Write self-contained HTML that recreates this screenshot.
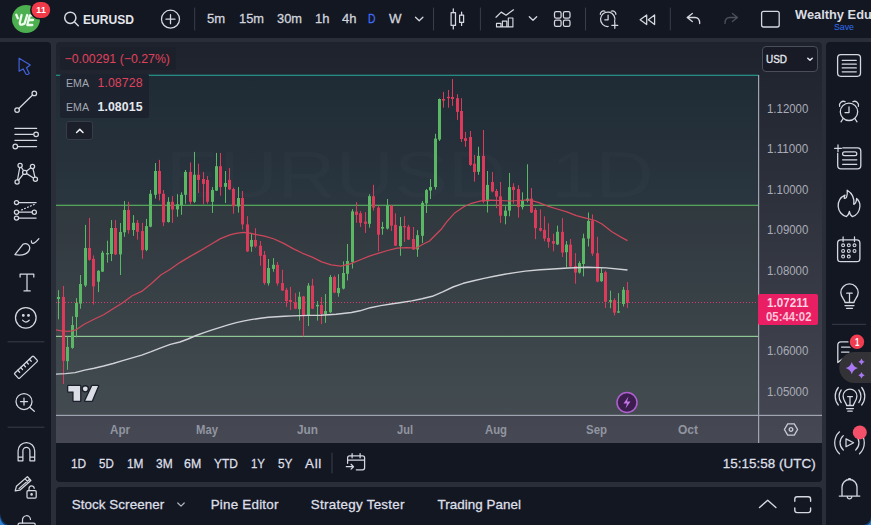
<!DOCTYPE html>
<html><head><meta charset="utf-8"><title>EURUSD chart</title>
<style>
*{box-sizing:border-box;margin:0;padding:0}
html,body{width:871px;height:525px;overflow:hidden;background:#2a2e39;font-family:"Liberation Sans",sans-serif;color:#d1d4dc}
.abs{position:absolute}
#top{left:0;top:0;width:871px;height:38px;background:#131722}
#left{left:0;top:42px;width:51px;height:483px;background:#131722;border-top-right-radius:4px}
#right{left:826px;top:42px;width:45px;height:483px;background:#131722;border-top-left-radius:4px}
#chart{left:56px;top:42px;width:766px;height:401px;background:linear-gradient(#1e222d,#464954);border-radius:4px 4px 0 0}
#range{left:56px;top:443px;width:766px;height:39px;background:#131722;border-radius:0 0 4px 4px}
#bottom{left:56px;top:487px;width:766px;height:38px;background:#131722;border-radius:4px 4px 0 0}
.t{position:absolute;white-space:nowrap;line-height:1}
.sep{position:absolute;width:1px;background:#3a3e4a}
.hsep{position:absolute;height:1px;background:#3a3e4a}
svg{overflow:visible}
.ic{position:absolute;fill:none;stroke:#d1d4dc;stroke-width:1.2;stroke-linecap:round;stroke-linejoin:round}
</style></head><body>
<div id="top" class="abs"></div>
<div id="left" class="abs"></div>
<div id="right" class="abs"></div>
<div id="chart" class="abs"></div>
<div id="range" class="abs"></div>
<div id="bottom" class="abs"></div>
<svg class="abs" style="left:56px;top:42px" width="766" height="401" viewBox="56 42 766 401">
<rect x="56" y="75" width="702.5" height="130" fill="rgba(0,112,112,0.07)"/>
<rect x="56" y="205" width="702.5" height="210" fill="rgba(76,175,80,0.06)"/>
<text x="165.7" y="197" textLength="488" lengthAdjust="spacingAndGlyphs" font-size="65" fill="rgba(255,255,255,0.014)" font-family="Liberation Sans, sans-serif">EURUSD, 1D</text>
<text x="220" y="300" textLength="380" lengthAdjust="spacingAndGlyphs" font-size="44" fill="rgba(255,255,255,0.014)" font-family="Liberation Sans, sans-serif">Euro / U.S. Dollar</text>
<rect x="56" y="74.7" width="702.5" height="1.2" fill="#27958b"/>
<rect x="56" y="204.7" width="702.5" height="1.2" fill="#58ad5e"/>
<rect x="56" y="335.8" width="702.5" height="1.2" fill="#8fc795"/>
<line x1="56" y1="302.5" x2="758" y2="302.5" stroke="#d63a70" stroke-width="1" stroke-dasharray="1,2"/>
<rect x="58" y="290.2" width="1" height="29.1" fill="#5ab864"/>
<rect x="57" y="297.0" width="3" height="2.0" fill="#5ab864"/>
<rect x="63" y="285.9" width="1" height="98.1" fill="#dc3a5b"/>
<rect x="62" y="296.9" width="3" height="63.9" fill="#dc3a5b"/>
<rect x="67" y="336.4" width="1" height="33.4" fill="#5ab864"/>
<rect x="66" y="346.9" width="3" height="14.3" fill="#5ab864"/>
<rect x="72" y="316.4" width="1" height="32.4" fill="#5ab864"/>
<rect x="71" y="325.0" width="3" height="22.9" fill="#5ab864"/>
<rect x="76" y="298.2" width="1" height="39.2" fill="#5ab864"/>
<rect x="75" y="303.0" width="3" height="14.0" fill="#5ab864"/>
<rect x="80" y="275.0" width="1" height="33.7" fill="#5ab864"/>
<rect x="79" y="284.0" width="3" height="19.6" fill="#5ab864"/>
<rect x="85" y="224.9" width="1" height="62.1" fill="#5ab864"/>
<rect x="84" y="248.0" width="3" height="37.5" fill="#5ab864"/>
<rect x="89" y="217.9" width="1" height="42.8" fill="#dc3a5b"/>
<rect x="88" y="248.0" width="3" height="11.8" fill="#dc3a5b"/>
<rect x="93" y="255.4" width="1" height="49.1" fill="#dc3a5b"/>
<rect x="92" y="258.8" width="3" height="27.6" fill="#dc3a5b"/>
<rect x="98" y="270.2" width="1" height="21.9" fill="#5ab864"/>
<rect x="97" y="270.8" width="3" height="10.9" fill="#5ab864"/>
<rect x="102" y="250.8" width="1" height="21.2" fill="#5ab864"/>
<rect x="101" y="252.7" width="3" height="18.9" fill="#5ab864"/>
<rect x="107" y="240.7" width="1" height="21.9" fill="#5ab864"/>
<rect x="106" y="253.0" width="3" height="1.4" fill="#5ab864"/>
<rect x="111" y="220.1" width="1" height="41.0" fill="#5ab864"/>
<rect x="110" y="228.0" width="3" height="26.0" fill="#5ab864"/>
<rect x="115" y="220.1" width="1" height="34.9" fill="#dc3a5b"/>
<rect x="114" y="228.0" width="3" height="26.4" fill="#dc3a5b"/>
<rect x="120" y="223.0" width="1" height="52.0" fill="#5ab864"/>
<rect x="119" y="232.0" width="3" height="22.4" fill="#5ab864"/>
<rect x="124" y="201.0" width="1" height="35.8" fill="#5ab864"/>
<rect x="123" y="210.0" width="3" height="22.3" fill="#5ab864"/>
<rect x="128" y="201.8" width="1" height="31.9" fill="#dc3a5b"/>
<rect x="127" y="210.0" width="3" height="20.1" fill="#dc3a5b"/>
<rect x="133" y="215.1" width="1" height="20.7" fill="#5ab864"/>
<rect x="132" y="222.8" width="3" height="7.2" fill="#5ab864"/>
<rect x="137" y="220.0" width="1" height="19.6" fill="#dc3a5b"/>
<rect x="136" y="222.8" width="3" height="9.0" fill="#dc3a5b"/>
<rect x="142" y="222.8" width="1" height="36.0" fill="#dc3a5b"/>
<rect x="141" y="231.1" width="3" height="19.1" fill="#dc3a5b"/>
<rect x="146" y="218.9" width="1" height="32.3" fill="#5ab864"/>
<rect x="145" y="226.1" width="3" height="23.8" fill="#5ab864"/>
<rect x="150" y="190.0" width="1" height="37.2" fill="#5ab864"/>
<rect x="149" y="193.8" width="3" height="32.9" fill="#5ab864"/>
<rect x="155" y="163.0" width="1" height="35.6" fill="#5ab864"/>
<rect x="154" y="171.0" width="3" height="23.8" fill="#5ab864"/>
<rect x="159" y="159.9" width="1" height="40.6" fill="#dc3a5b"/>
<rect x="158" y="171.0" width="3" height="22.8" fill="#dc3a5b"/>
<rect x="163" y="190.0" width="1" height="36.1" fill="#dc3a5b"/>
<rect x="162" y="193.8" width="3" height="28.5" fill="#dc3a5b"/>
<rect x="168" y="197.2" width="1" height="25.4" fill="#5ab864"/>
<rect x="167" y="201.8" width="3" height="20.2" fill="#5ab864"/>
<rect x="172" y="196.1" width="1" height="26.7" fill="#dc3a5b"/>
<rect x="171" y="201.8" width="3" height="7.6" fill="#dc3a5b"/>
<rect x="177" y="194.2" width="1" height="22.5" fill="#5ab864"/>
<rect x="176" y="204.3" width="3" height="5.1" fill="#5ab864"/>
<rect x="181" y="192.3" width="1" height="22.5" fill="#5ab864"/>
<rect x="180" y="194.8" width="3" height="10.4" fill="#5ab864"/>
<rect x="185" y="170.0" width="1" height="33.7" fill="#5ab864"/>
<rect x="184" y="171.9" width="3" height="22.9" fill="#5ab864"/>
<rect x="190" y="162.4" width="1" height="41.9" fill="#dc3a5b"/>
<rect x="189" y="171.9" width="3" height="29.9" fill="#dc3a5b"/>
<rect x="194" y="151.9" width="1" height="51.1" fill="#5ab864"/>
<rect x="193" y="174.8" width="3" height="27.0" fill="#5ab864"/>
<rect x="198" y="163.7" width="1" height="29.2" fill="#dc3a5b"/>
<rect x="197" y="174.8" width="3" height="5.1" fill="#dc3a5b"/>
<rect x="203" y="171.9" width="1" height="32.4" fill="#dc3a5b"/>
<rect x="202" y="179.0" width="3" height="4.9" fill="#dc3a5b"/>
<rect x="207" y="176.1" width="1" height="27.6" fill="#dc3a5b"/>
<rect x="206" y="179.9" width="3" height="21.9" fill="#dc3a5b"/>
<rect x="212" y="187.1" width="1" height="25.8" fill="#5ab864"/>
<rect x="211" y="190.0" width="3" height="11.8" fill="#5ab864"/>
<rect x="216" y="152.9" width="1" height="38.1" fill="#5ab864"/>
<rect x="215" y="166.2" width="3" height="24.4" fill="#5ab864"/>
<rect x="220" y="152.9" width="1" height="42.8" fill="#dc3a5b"/>
<rect x="219" y="166.2" width="3" height="20.9" fill="#dc3a5b"/>
<rect x="225" y="171.0" width="1" height="32.0" fill="#5ab864"/>
<rect x="224" y="183.0" width="3" height="3.8" fill="#5ab864"/>
<rect x="229" y="168.1" width="1" height="21.9" fill="#dc3a5b"/>
<rect x="228" y="179.9" width="3" height="9.5" fill="#dc3a5b"/>
<rect x="233" y="187.7" width="1" height="26.1" fill="#dc3a5b"/>
<rect x="232" y="189.0" width="3" height="17.2" fill="#dc3a5b"/>
<rect x="238" y="187.1" width="1" height="25.5" fill="#5ab864"/>
<rect x="237" y="198.0" width="3" height="8.4" fill="#5ab864"/>
<rect x="242" y="191.0" width="1" height="38.5" fill="#dc3a5b"/>
<rect x="241" y="198.0" width="3" height="26.4" fill="#dc3a5b"/>
<rect x="247" y="216.2" width="1" height="35.8" fill="#dc3a5b"/>
<rect x="246" y="224.4" width="3" height="27.0" fill="#dc3a5b"/>
<rect x="251" y="233.9" width="1" height="17.9" fill="#5ab864"/>
<rect x="250" y="240.0" width="3" height="6.7" fill="#5ab864"/>
<rect x="255" y="228.2" width="1" height="19.4" fill="#dc3a5b"/>
<rect x="254" y="240.0" width="3" height="6.3" fill="#dc3a5b"/>
<rect x="260" y="241.0" width="1" height="24.7" fill="#dc3a5b"/>
<rect x="259" y="245.7" width="3" height="10.1" fill="#dc3a5b"/>
<rect x="264" y="251.0" width="1" height="33.8" fill="#dc3a5b"/>
<rect x="263" y="254.9" width="3" height="28.1" fill="#dc3a5b"/>
<rect x="268" y="259.0" width="1" height="26.6" fill="#5ab864"/>
<rect x="267" y="268.0" width="3" height="15.3" fill="#5ab864"/>
<rect x="273" y="258.1" width="1" height="13.6" fill="#5ab864"/>
<rect x="272" y="264.8" width="3" height="4.1" fill="#5ab864"/>
<rect x="277" y="261.9" width="1" height="23.7" fill="#dc3a5b"/>
<rect x="276" y="264.8" width="3" height="18.6" fill="#dc3a5b"/>
<rect x="282" y="269.8" width="1" height="21.1" fill="#dc3a5b"/>
<rect x="281" y="283.1" width="3" height="7.4" fill="#dc3a5b"/>
<rect x="286" y="287.8" width="1" height="19.1" fill="#dc3a5b"/>
<rect x="285" y="289.8" width="3" height="11.3" fill="#dc3a5b"/>
<rect x="290" y="286.9" width="1" height="23.1" fill="#dc3a5b"/>
<rect x="289" y="300.0" width="3" height="2.0" fill="#dc3a5b"/>
<rect x="295" y="293.1" width="1" height="16.1" fill="#dc3a5b"/>
<rect x="294" y="302.3" width="3" height="6.4" fill="#dc3a5b"/>
<rect x="299" y="291.8" width="1" height="28.8" fill="#5ab864"/>
<rect x="298" y="296.7" width="3" height="12.5" fill="#5ab864"/>
<rect x="303" y="295.9" width="1" height="40.4" fill="#dc3a5b"/>
<rect x="302" y="296.5" width="3" height="18.8" fill="#dc3a5b"/>
<rect x="308" y="283.0" width="1" height="43.0" fill="#5ab864"/>
<rect x="307" y="285.6" width="3" height="30.4" fill="#5ab864"/>
<rect x="312" y="278.8" width="1" height="30.4" fill="#dc3a5b"/>
<rect x="311" y="285.6" width="3" height="23.1" fill="#dc3a5b"/>
<rect x="317" y="301.1" width="1" height="19.5" fill="#5ab864"/>
<rect x="316" y="304.9" width="3" height="1.5" fill="#5ab864"/>
<rect x="321" y="297.0" width="1" height="27.1" fill="#dc3a5b"/>
<rect x="320" y="304.9" width="3" height="9.2" fill="#dc3a5b"/>
<rect x="325" y="294.0" width="1" height="28.9" fill="#5ab864"/>
<rect x="324" y="311.0" width="3" height="3.1" fill="#5ab864"/>
<rect x="330" y="275.0" width="1" height="38.0" fill="#5ab864"/>
<rect x="329" y="277.0" width="3" height="35.2" fill="#5ab864"/>
<rect x="334" y="275.6" width="1" height="17.6" fill="#dc3a5b"/>
<rect x="333" y="277.0" width="3" height="15.6" fill="#dc3a5b"/>
<rect x="338" y="274.2" width="1" height="22.5" fill="#5ab864"/>
<rect x="337" y="288.0" width="3" height="5.1" fill="#5ab864"/>
<rect x="343" y="261.3" width="1" height="28.1" fill="#5ab864"/>
<rect x="342" y="273.0" width="3" height="15.6" fill="#5ab864"/>
<rect x="347" y="244.0" width="1" height="36.4" fill="#5ab864"/>
<rect x="346" y="261.0" width="3" height="12.8" fill="#5ab864"/>
<rect x="352" y="209.1" width="1" height="59.4" fill="#5ab864"/>
<rect x="351" y="211.4" width="3" height="50.5" fill="#5ab864"/>
<rect x="356" y="202.1" width="1" height="20.6" fill="#dc3a5b"/>
<rect x="355" y="211.6" width="3" height="3.3" fill="#dc3a5b"/>
<rect x="360" y="211.2" width="1" height="15.8" fill="#dc3a5b"/>
<rect x="359" y="213.3" width="3" height="9.6" fill="#dc3a5b"/>
<rect x="365" y="212.1" width="1" height="20.8" fill="#dc3a5b"/>
<rect x="364" y="221.6" width="3" height="2.2" fill="#dc3a5b"/>
<rect x="369" y="194.3" width="1" height="33.3" fill="#5ab864"/>
<rect x="368" y="196.2" width="3" height="27.6" fill="#5ab864"/>
<rect x="373" y="184.8" width="1" height="25.7" fill="#dc3a5b"/>
<rect x="372" y="196.2" width="3" height="11.4" fill="#dc3a5b"/>
<rect x="378" y="205.7" width="1" height="45.7" fill="#dc3a5b"/>
<rect x="377" y="207.6" width="3" height="27.1" fill="#dc3a5b"/>
<rect x="382" y="221.9" width="1" height="12.8" fill="#5ab864"/>
<rect x="381" y="227.0" width="3" height="1.6" fill="#5ab864"/>
<rect x="387" y="199.0" width="1" height="30.5" fill="#5ab864"/>
<rect x="386" y="205.3" width="3" height="23.3" fill="#5ab864"/>
<rect x="391" y="204.8" width="1" height="26.1" fill="#dc3a5b"/>
<rect x="390" y="205.7" width="3" height="20.0" fill="#dc3a5b"/>
<rect x="395" y="213.3" width="1" height="32.8" fill="#dc3a5b"/>
<rect x="394" y="224.8" width="3" height="20.9" fill="#dc3a5b"/>
<rect x="400" y="217.1" width="1" height="38.7" fill="#5ab864"/>
<rect x="399" y="226.1" width="3" height="20.0" fill="#5ab864"/>
<rect x="404" y="216.2" width="1" height="25.7" fill="#dc3a5b"/>
<rect x="403" y="226.1" width="3" height="1.2" fill="#dc3a5b"/>
<rect x="408" y="224.8" width="1" height="15.2" fill="#dc3a5b"/>
<rect x="407" y="226.7" width="3" height="12.9" fill="#dc3a5b"/>
<rect x="413" y="227.0" width="1" height="22.9" fill="#dc3a5b"/>
<rect x="412" y="239.0" width="3" height="10.5" fill="#dc3a5b"/>
<rect x="417" y="230.1" width="1" height="26.7" fill="#5ab864"/>
<rect x="416" y="235.2" width="3" height="14.3" fill="#5ab864"/>
<rect x="422" y="201.0" width="1" height="41.9" fill="#5ab864"/>
<rect x="421" y="202.9" width="3" height="32.9" fill="#5ab864"/>
<rect x="426" y="189.0" width="1" height="24.0" fill="#5ab864"/>
<rect x="425" y="190.1" width="3" height="13.3" fill="#5ab864"/>
<rect x="430" y="179.0" width="1" height="20.0" fill="#5ab864"/>
<rect x="429" y="187.0" width="3" height="3.5" fill="#5ab864"/>
<rect x="435" y="133.8" width="1" height="55.7" fill="#5ab864"/>
<rect x="434" y="138.6" width="3" height="48.4" fill="#5ab864"/>
<rect x="439" y="98.5" width="1" height="42.5" fill="#5ab864"/>
<rect x="438" y="99.0" width="3" height="40.5" fill="#5ab864"/>
<rect x="443" y="91.9" width="1" height="15.8" fill="#dc3a5b"/>
<rect x="442" y="99.0" width="3" height="1.6" fill="#dc3a5b"/>
<rect x="448" y="90.0" width="1" height="17.7" fill="#dc3a5b"/>
<rect x="447" y="96.8" width="3" height="1.4" fill="#dc3a5b"/>
<rect x="452" y="79.1" width="1" height="26.7" fill="#dc3a5b"/>
<rect x="451" y="97.0" width="3" height="2.0" fill="#dc3a5b"/>
<rect x="457" y="94.2" width="1" height="25.7" fill="#dc3a5b"/>
<rect x="456" y="98.2" width="3" height="13.7" fill="#dc3a5b"/>
<rect x="461" y="98.2" width="1" height="43.8" fill="#dc3a5b"/>
<rect x="460" y="111.0" width="3" height="28.0" fill="#dc3a5b"/>
<rect x="465" y="131.9" width="1" height="14.9" fill="#dc3a5b"/>
<rect x="464" y="138.2" width="3" height="2.7" fill="#dc3a5b"/>
<rect x="470" y="131.0" width="1" height="34.8" fill="#dc3a5b"/>
<rect x="469" y="137.0" width="3" height="27.9" fill="#dc3a5b"/>
<rect x="474" y="155.0" width="1" height="26.6" fill="#dc3a5b"/>
<rect x="473" y="163.7" width="3" height="8.4" fill="#dc3a5b"/>
<rect x="478" y="146.8" width="1" height="28.0" fill="#5ab864"/>
<rect x="477" y="155.9" width="3" height="15.9" fill="#5ab864"/>
<rect x="483" y="130.0" width="1" height="73.3" fill="#dc3a5b"/>
<rect x="482" y="155.9" width="3" height="45.5" fill="#dc3a5b"/>
<rect x="487" y="171.0" width="1" height="41.5" fill="#5ab864"/>
<rect x="486" y="184.9" width="3" height="16.5" fill="#5ab864"/>
<rect x="492" y="171.9" width="1" height="20.4" fill="#dc3a5b"/>
<rect x="491" y="182.0" width="3" height="9.5" fill="#dc3a5b"/>
<rect x="496" y="189.0" width="1" height="19.1" fill="#dc3a5b"/>
<rect x="495" y="191.0" width="3" height="5.7" fill="#dc3a5b"/>
<rect x="500" y="182.0" width="1" height="41.0" fill="#dc3a5b"/>
<rect x="499" y="196.3" width="3" height="19.4" fill="#dc3a5b"/>
<rect x="505" y="206.2" width="1" height="18.1" fill="#5ab864"/>
<rect x="504" y="210.6" width="3" height="5.5" fill="#5ab864"/>
<rect x="509" y="172.9" width="1" height="43.4" fill="#5ab864"/>
<rect x="508" y="187.1" width="3" height="23.5" fill="#5ab864"/>
<rect x="513" y="183.3" width="1" height="20.4" fill="#dc3a5b"/>
<rect x="512" y="186.8" width="3" height="3.2" fill="#dc3a5b"/>
<rect x="518" y="185.2" width="1" height="32.4" fill="#dc3a5b"/>
<rect x="517" y="189.0" width="3" height="18.1" fill="#dc3a5b"/>
<rect x="522" y="192.3" width="1" height="17.1" fill="#5ab864"/>
<rect x="521" y="200.5" width="3" height="6.6" fill="#5ab864"/>
<rect x="527" y="164.3" width="1" height="38.1" fill="#5ab864"/>
<rect x="526" y="198.6" width="3" height="2.4" fill="#5ab864"/>
<rect x="531" y="188.1" width="1" height="24.9" fill="#dc3a5b"/>
<rect x="530" y="198.6" width="3" height="13.9" fill="#dc3a5b"/>
<rect x="535" y="208.1" width="1" height="31.1" fill="#dc3a5b"/>
<rect x="534" y="210.0" width="3" height="18.2" fill="#dc3a5b"/>
<rect x="540" y="209.4" width="1" height="22.1" fill="#dc3a5b"/>
<rect x="539" y="228.1" width="3" height="2.5" fill="#dc3a5b"/>
<rect x="544" y="216.3" width="1" height="25.0" fill="#dc3a5b"/>
<rect x="543" y="229.9" width="3" height="8.7" fill="#dc3a5b"/>
<rect x="548" y="223.3" width="1" height="24.4" fill="#dc3a5b"/>
<rect x="547" y="238.0" width="3" height="3.8" fill="#dc3a5b"/>
<rect x="553" y="233.7" width="1" height="17.6" fill="#dc3a5b"/>
<rect x="552" y="241.1" width="3" height="2.6" fill="#dc3a5b"/>
<rect x="557" y="225.6" width="1" height="19.4" fill="#5ab864"/>
<rect x="556" y="231.8" width="3" height="12.6" fill="#5ab864"/>
<rect x="562" y="218.2" width="1" height="38.8" fill="#dc3a5b"/>
<rect x="561" y="231.8" width="3" height="20.8" fill="#dc3a5b"/>
<rect x="566" y="241.1" width="1" height="26.2" fill="#5ab864"/>
<rect x="565" y="244.6" width="3" height="7.6" fill="#5ab864"/>
<rect x="570" y="239.0" width="1" height="28.3" fill="#dc3a5b"/>
<rect x="569" y="244.6" width="3" height="21.9" fill="#dc3a5b"/>
<rect x="575" y="253.2" width="1" height="30.5" fill="#dc3a5b"/>
<rect x="574" y="266.0" width="3" height="6.6" fill="#dc3a5b"/>
<rect x="579" y="261.2" width="1" height="12.4" fill="#5ab864"/>
<rect x="578" y="263.1" width="3" height="9.5" fill="#5ab864"/>
<rect x="583" y="233.7" width="1" height="42.7" fill="#5ab864"/>
<rect x="582" y="238.3" width="3" height="25.7" fill="#5ab864"/>
<rect x="588" y="212.5" width="1" height="34.0" fill="#5ab864"/>
<rect x="587" y="220.9" width="3" height="17.7" fill="#5ab864"/>
<rect x="592" y="214.4" width="1" height="41.5" fill="#dc3a5b"/>
<rect x="591" y="220.5" width="3" height="33.1" fill="#dc3a5b"/>
<rect x="597" y="236.8" width="1" height="45.4" fill="#dc3a5b"/>
<rect x="596" y="253.2" width="3" height="28.4" fill="#dc3a5b"/>
<rect x="601" y="267.9" width="1" height="13.9" fill="#5ab864"/>
<rect x="600" y="273.0" width="3" height="8.2" fill="#5ab864"/>
<rect x="605" y="270.7" width="1" height="37.2" fill="#dc3a5b"/>
<rect x="604" y="272.2" width="3" height="29.6" fill="#dc3a5b"/>
<rect x="610" y="290.7" width="1" height="17.5" fill="#5ab864"/>
<rect x="609" y="300.2" width="3" height="1.6" fill="#5ab864"/>
<rect x="614" y="298.3" width="1" height="17.2" fill="#dc3a5b"/>
<rect x="613" y="300.2" width="3" height="12.4" fill="#dc3a5b"/>
<rect x="618" y="293.2" width="1" height="19.8" fill="#5ab864"/>
<rect x="617" y="311.3" width="3" height="1.3" fill="#5ab864"/>
<rect x="623" y="286.9" width="1" height="19.6" fill="#5ab864"/>
<rect x="622" y="289.8" width="3" height="14.2" fill="#5ab864"/>
<rect x="627" y="282.1" width="1" height="25.8" fill="#dc3a5b"/>
<rect x="626" y="290.1" width="3" height="12.6" fill="#dc3a5b"/>
<path d="M56.0,329.8 L62.0,331.0 L67.4,331.3 L72.0,330.8 L76.0,329.8 L84.6,324.0 L94.1,319.3 L103.6,314.7 L113.1,308.8 L122.7,302.8 L132.2,295.7 L141.7,291.4 L151.2,283.8 L160.8,275.0 L170.3,269.3 L179.8,262.6 L189.3,256.9 L196.0,253.1 L201.4,250.0 L211.0,244.3 L220.5,238.6 L230.0,234.8 L236.0,233.3 L243.6,232.4 L250.0,233.2 L255.0,234.3 L264.6,236.2 L274.1,239.0 L283.6,243.4 L293.1,248.6 L302.7,253.3 L312.2,257.1 L321.7,261.9 L331.2,264.8 L340.8,266.1 L350.3,263.8 L359.8,260.0 L369.3,256.2 L378.1,253.3 L387.6,250.5 L397.1,248.2 L406.7,247.6 L416.2,248.2 L421.9,244.8 L429.5,241.0 L435.2,235.2 L441.0,229.5 L446.7,221.9 L454.3,213.3 L463.8,206.7 L471.5,203.3 L481.0,200.9 L490.6,200.1 L500.1,200.5 L509.6,201.0 L519.1,200.5 L528.7,199.9 L538.2,202.4 L547.7,206.2 L557.2,209.0 L566.8,211.9 L576.3,215.7 L585.8,218.2 L595.3,220.5 L602.0,224.0 L611.9,231.7 L621.4,237.4 L627.5,240.6" fill="none" stroke="#cc475b" stroke-width="1.25" stroke-linejoin="round"/>
<path d="M56.0,374.1 L65.5,373.6 L75.0,372.6 L84.6,370.1 L94.1,368.2 L103.6,366.0 L113.1,363.5 L122.7,360.6 L132.2,357.8 L141.7,355.1 L151.2,351.7 L160.8,347.9 L170.3,344.4 L180.0,342.0 L188.0,339.0 L196.1,335.5 L204.1,332.6 L212.2,329.9 L220.2,327.3 L228.2,324.9 L236.3,322.6 L244.3,320.9 L252.3,319.4 L260.4,318.3 L268.4,317.3 L276.5,316.7 L284.5,316.2 L292.5,315.9 L308.6,315.4 L321.0,315.2 L336.2,314.3 L351.4,312.5 L360.0,310.8 L370.3,307.7 L380.7,305.6 L391.0,304.0 L401.3,302.5 L411.7,300.9 L422.0,298.8 L432.3,296.3 L442.7,291.8 L453.0,287.0 L463.3,283.3 L473.7,280.8 L484.0,278.4 L494.3,276.3 L504.7,274.2 L515.0,272.6 L525.3,271.1 L540.0,269.8 L549.0,269.2 L568.1,268.0 L587.1,267.3 L606.2,267.9 L627.5,270.0" fill="none" stroke="#d0d2d8" stroke-width="1.4" stroke-linejoin="round"/>
<rect x="758" y="75" width="1.2" height="368" fill="#a0a4b0"/>
<rect x="56" y="414.8" width="766" height="1.2" fill="#a0a4b0"/>
<g stroke="#1c202b" stroke-width="2.6" stroke-linejoin="round" fill="#1c202b"><path d="M68.3,386 H80.1 V400.8 H73.6 V391.5 H68.3 Z"/><circle cx="85.3" cy="388.8" r="2.4"/><path d="M92.2,386 H98 L91.8,400.8 H85.3 Z"/></g>
<g fill="#dcdee6"><path d="M68.3,386 H80.1 V400.8 H73.6 V391.5 H68.3 Z"/><circle cx="85.3" cy="388.8" r="2.4"/><path d="M92.2,386 H98 L91.8,400.8 H85.3 Z"/></g>
<g transform="translate(627,402.5)"><circle r="10" fill="#3b1e4e" stroke="#b05fd0" stroke-width="1.5"/><path d="M1.5,-6 L-3.5,1 H0 L-1.5,6 L3.5,-1 H0 Z" fill="#c774e8"/></g>
<rect x="758" y="294" width="60" height="31" rx="2" fill="#e91e63"/>
<g transform="translate(791,429.5)" fill="none" stroke="#c9ccd4" stroke-width="1.3"><path d="M-3.3,-5.7 H3.3 L6.6,0 L3.3,5.7 H-3.3 L-6.6,0 Z" stroke-linejoin="round"/><circle r="1.8"/></g>
</svg>
<!-- legend backgrounds -->
<div class="abs" style="left:60px;top:47px;width:116px;height:23px;background:#1b202b;border-radius:2px"></div>
<div class="abs" style="left:60px;top:74px;width:89px;height:43.5px;background:#1c232e;border-radius:2px"></div>
<div class="abs" style="left:65.5px;top:120.5px;width:27.5px;height:19.5px;background:#1a1f2a;border:1px solid #383c48;border-radius:3px"></div>
<svg class="ic" style="left:65.5px;top:120.5px;stroke:#f0f1f4;stroke-width:1.5" width="28" height="20"><path d="M10.6,11.5 L13.8,8.4 L17,11.5"/></svg>
<div class="abs" style="left:762px;top:46px;width:56px;height:26px;background:#181b26;border:1px solid #4a4e5a;border-radius:4px"></div>
<svg class="ic" style="left:762px;top:46px;stroke:#e6e8ee;stroke-width:1.5" width="56" height="26"><path d="M45.8,12.2 L48,14.3 L50.2,12.2"/></svg>
<div class="t" style="left:64.5px;top:52.5px;font-size:12.3px;color:#e0425c;letter-spacing:0.01px;">−0.00291 (−0.27%)</div>
<div class="t" style="left:65.5px;top:76.8px;font-size:11.6px;color:#a4a7b1;transform:scaleX(0.9150);transform-origin:0 0;">EMA</div>
<div class="t" style="left:97.5px;top:76.5px;font-size:12.3px;color:#e0425c;letter-spacing:0.09px;">1.08728</div>
<div class="t" style="left:65.5px;top:100.8px;font-size:11.6px;color:#a4a7b1;transform:scaleX(0.9150);transform-origin:0 0;">EMA</div>
<div class="t" style="left:97.5px;top:100.5px;font-size:12.3px;color:#e6e8ee;font-weight:bold;letter-spacing:0.09px;">1.08015</div>
<div class="t" style="left:766.0px;top:53.2px;font-size:11.7px;color:#e6e8ee;-webkit-text-stroke:0.35px #e6e8ee;transform:scaleX(0.8501);transform-origin:0 0;">USD</div>
<div class="t" style="left:767.0px;top:102.6px;font-size:12px;color:#a9acb7;transform:scaleX(0.9522);transform-origin:0 0;">1.12000</div>
<div class="t" style="left:767.0px;top:143.1px;font-size:12px;color:#a9acb7;transform:scaleX(0.9722);transform-origin:0 0;">1.11000</div>
<div class="t" style="left:767.0px;top:183.6px;font-size:12px;color:#a9acb7;transform:scaleX(0.9522);transform-origin:0 0;">1.10000</div>
<div class="t" style="left:767.0px;top:224.1px;font-size:12px;color:#a9acb7;transform:scaleX(0.9522);transform-origin:0 0;">1.09000</div>
<div class="t" style="left:767.0px;top:264.6px;font-size:12px;color:#a9acb7;transform:scaleX(0.9522);transform-origin:0 0;">1.08000</div>
<div class="t" style="left:767.0px;top:345.4px;font-size:12px;color:#a9acb7;transform:scaleX(0.9522);transform-origin:0 0;">1.06000</div>
<div class="t" style="left:767.0px;top:385.6px;font-size:12px;color:#a9acb7;transform:scaleX(0.9522);transform-origin:0 0;">1.05000</div>
<div class="t" style="left:110.0px;top:424.1px;font-size:12px;color:#9195a0;font-weight:bold;transform:scaleX(0.9678);transform-origin:0 0;">Apr</div>
<div class="t" style="left:196.3px;top:424.1px;font-size:12px;color:#9195a0;font-weight:bold;transform:scaleX(0.9425);transform-origin:0 0;">May</div>
<div class="t" style="left:297.0px;top:424.1px;font-size:12px;color:#9195a0;font-weight:bold;transform:scaleX(0.9844);transform-origin:0 0;">Jun</div>
<div class="t" style="left:397.0px;top:424.1px;font-size:12px;color:#9195a0;font-weight:bold;transform:scaleX(0.9229);transform-origin:0 0;">Jul</div>
<div class="t" style="left:485.0px;top:424.1px;font-size:12px;color:#9195a0;font-weight:bold;transform:scaleX(0.9432);transform-origin:0 0;">Aug</div>
<div class="t" style="left:585.5px;top:424.1px;font-size:12px;color:#9195a0;font-weight:bold;transform:scaleX(0.9542);transform-origin:0 0;">Sep</div>
<div class="t" style="left:678.0px;top:424.1px;font-size:12px;color:#9195a0;font-weight:bold;transform:scaleX(0.9999);transform-origin:0 0;">Oct</div>
<div class="t" style="left:767.0px;top:296.5px;font-size:12px;color:#ffd3e2;font-weight:bold;transform:scaleX(0.9717);transform-origin:0 0;">1.07211</div>
<div class="t" style="left:766.0px;top:310.7px;font-size:12px;color:#ffc4d8;font-weight:bold;transform:scaleX(0.9473);transform-origin:0 0;">05:44:02</div>
<svg class="abs" style="left:0;top:0" width="871" height="525" viewBox="0 0 871 525" fill="none" stroke="#d5d8df" stroke-width="1.25" stroke-linecap="round" stroke-linejoin="round">
<circle cx="26" cy="19" r="14" fill="#4caf50" stroke="none"/>
<g stroke="#eefcee" stroke-width="2.3" fill="none"><path d="M16.3,14.8 L17.8,18.3"/><path d="M21.6,15 L19.8,22.6 Q19.5,25 22,24.6 L24.5,23.6 L27.2,15"/><path d="M34,15.3 L29.8,15.3 L27.3,25 L32.3,25"/><path d="M28.8,20 L33,20"/></g>
<rect x="30" y="0.4" width="21.8" height="19.2" rx="9.6" fill="#131722" stroke="none"/>
<rect x="31.6" y="1.9" width="18.6" height="16.2" rx="8.1" fill="#f03a4a" stroke="none"/>
<circle cx="70.3" cy="17.8" r="5.6" stroke-width="1.5"/><path d="M74.5,22 L78.3,25.8" stroke-width="1.5"/>
<circle cx="170.5" cy="19.2" r="9" stroke-width="1.3"/><path d="M170.5,14.7 V23.7 M166,19.2 H175" stroke-width="1.3"/>
<path d="M415.5,17.3 L419.2,20.8 L422.9,17.3" stroke-width="1.3"/>
<rect x="451.1" y="12.7" width="4.4" height="12.7"/><path d="M453.3,8.8 V12.7 M453.3,25.4 V28.9"/>
<rect x="459.6" y="15.2" width="4" height="7.2"/><path d="M461.6,12.1 V15.2 M461.6,22.4 V25.4"/>
<path d="M496.5,26.9 V23.4 H500.9 V26.9 M502.4,26.9 V21.1 H506.8 V26.9 M508.3,26.9 V18 H512.9 V26.9 M496.5,26.9 H512.9" stroke-width="1.15"/>
<path d="M496,17.2 L501.2,12.1 L506.1,15.2 L513.5,9.8"/>
<path d="M529.3,16.8 L533,20.3 L536.7,16.8" stroke-width="1.3"/>
<rect x="554.5" y="11.7" width="6.6" height="6.3" rx="1.6"/>
<rect x="554.5" y="20.1" width="6.6" height="6.3" rx="1.6"/>
<rect x="563.4" y="11.7" width="6.6" height="6.3" rx="1.6"/>
<rect x="563.4" y="20.1" width="6.6" height="6.3" rx="1.6"/>
<path d="M614.6,21.5 A7.2,7.2 0 1,0 608.1,26.5"/><path d="M608.1,15 V19.8 H604.8"/><path d="M600.3,14.3 A3.3,3.3 0 0,1 605,11.2 M611.2,11.2 A3.3,3.3 0 0,1 615.9,14.3"/><path d="M614.8,22.3 V28.3 M611.8,25.3 H617.8"/>
<path d="M640.1,19.8 L646.7,15 V24.6 Z M648.3,19.8 L654.6,15 V24.6 Z"/>
<path d="M692.3,13.4 L687.2,17.5 L692.3,21.5 M687.6,17.5 H695 Q699.7,17.5 699.7,23.6" stroke-width="1.3"/>
<path d="M732.4,13.4 L737.5,17.5 L732.4,21.5 M737.1,17.5 H729.7 Q725,17.5 725,23.6" stroke="#4c505d" stroke-width="1.3"/>
<rect x="761.6" y="11.3" width="17.6" height="15.7" rx="2" stroke-width="1.3"/>
<path d="M19.1,58.2 L19.1,71.2 L23.1,68.9 L25.9,74 Q27.5,75.2 29.3,73.4 L26.5,67.8 L30.3,65 Z" stroke="#4263dc" stroke-width="1.15"/>
<circle cx="17.1" cy="110.1" r="2.3"/><circle cx="34.3" cy="93.4" r="2.3"/><path d="M18.8,108.5 L32.6,95"/>
<path d="M14.9,128.4 H36.6 M14.9,134.3 H33.8 M14.9,140.3 H36.6 M17.6,146.5 H36.6"/><circle cx="36.1" cy="134.3" r="2.3" fill="#131722"/><circle cx="15.3" cy="146.5" r="2.3" fill="#131722"/>
<path d="M20.1,165.5 L17.1,182 L24.7,172.4 L20.1,165.5 M24.7,172.4 L32.5,166.5 L35.4,179.3 L24.7,172.4"/>
<circle cx="20.1" cy="165.5" r="2.1" fill="#131722"/>
<circle cx="32.5" cy="166.5" r="2.1" fill="#131722"/>
<circle cx="24.7" cy="172.4" r="2.1" fill="#131722"/>
<circle cx="17.1" cy="182" r="2.1" fill="#131722"/>
<circle cx="35.4" cy="179.3" r="2.1" fill="#131722"/>
<path d="M18.8,202.6 H36.1 M18.8,212.2 H32 M18.8,218.1 H36.1"/><path d="M21.7,209.9 L34.3,204.4" stroke-dasharray="0.8,2.4"/>
<circle cx="16.5" cy="202.6" r="2.1" fill="#131722"/>
<circle cx="16.5" cy="212.2" r="2.1" fill="#131722"/>
<circle cx="34.3" cy="212.2" r="2.1" fill="#131722"/>
<circle cx="16.5" cy="218.1" r="2.1" fill="#131722"/>
<path d="M14.9,254.6 L22.9,244.3 C26.5,242.4 30.5,245 29.6,249 C28.6,253.6 23,256 14.9,254.6 Z"/><path d="M31.4,240.8 C31.2,244.8 34,244.5 38.9,238.7"/>
<path d="M20.1,277 V274.2 H33.8 V277 M27,274.2 V290.9 M24,290.9 H30.2"/>
<circle cx="25.8" cy="317.8" r="10.3"/><circle cx="23.3" cy="315.4" r="0.8" fill="#d5d8df"/><circle cx="28.5" cy="315.4" r="0.8" fill="#d5d8df"/><path d="M22.6,320.2 Q25.8,323.8 29.2,320.2"/>
<path d="M8,341.8 H44" stroke="#3a3e4a" stroke-width="1"/>
<g transform="translate(26,367.3) rotate(-43.5)"><rect x="-13" y="-3.5" width="26" height="7" rx="1"/><path d="M-8,-3.5 V-0.8 M-4,-3.5 V-0.8 M0,-3.5 V-0.8 M4,-3.5 V-0.8 M8,-3.5 V-0.8"/></g>
<circle cx="24" cy="401.5" r="8"/><path d="M24,398 V405 M20.5,401.5 H27.5 M29.7,407.2 L34.3,411.3"/>
<path d="M8,427.2 H44" stroke="#3a3e4a" stroke-width="1"/>
<path d="M18.1,460.8 V450.8 A8.3,8.3 0 0,1 34.7,450.8 V460.8 H29.9 V450.8 A3.5,3.5 0 0,0 22.9,450.8 V460.8 Z M18.1,457 H22.9 M29.9,457 H34.7"/>
<path d="M15.2,490.9 L16.4,486.3 L27.4,476.6 L30.9,480.5 L19.8,490.2 Z M25,478.7 L28.5,482.6 M17.5,485.4 L26.3,477.6 M19,488.6 L29.6,479.2"/>
<rect x="27" y="490.7" width="9.2" height="7.3" rx="1" fill="#131722"/><path d="M29,490.7 V488.6 A2.6,2.6 0 0,1 34.2,488.3"/><circle cx="31.6" cy="494.4" r="0.7"/>
<path d="M22.5,523 V520 A4,4 0 0,1 30.5,519.5"/><rect x="18.1" y="523" width="17.1" height="8" rx="1.5"/>
<rect x="837.6" y="54.6" width="22.9" height="21.7" rx="3.2" stroke-width="1.3"/><path d="M842.2,60.3 H856.3 M842.2,64.2 H856.3 M842.2,67.9 H856.3 M842.2,71.8 H856.3"/>
<circle cx="849" cy="111.8" r="8.7" stroke-width="1.3"/><path d="M849,106.8 V112.5 H845"/><path d="M839.6,106.3 A4,4 0 0,1 845.2,101.7 M852.8,101.7 A4,4 0 0,1 858.4,106.3"/><path d="M843.2,118.5 L841,121.8 M854.8,118.5 L857,121.8"/>
<path d="M838,144.9 V151.7 M834.6,148.3 H841.4"/><path d="M842.8,147.9 H857.5 A3.3,3.3 0 0,1 860.8,151.2 V165.6 A3.3,3.3 0 0,1 857.5,168.9 H841 A3.3,3.3 0 0,1 837.7,165.6 V153.3" stroke-width="1.3"/><rect x="842.6" y="151.8" width="14.2" height="3.9" rx="1.9"/><path d="M842.6,159.8 H856.8 M842.6,164.3 H856.8"/>
<path d="M847.2,190.2 C851.5,192.8 854.6,198 853.8,204.4 C855.4,203.5 856.5,201 856.6,198.4 C859,200.5 860.2,203.5 859.9,206.5 C859.5,211.5 856.5,215.3 852.3,216.6 C850.5,215.5 849.6,213.5 849.4,211.4 C849,213.5 848,215.5 846.5,216.6 C842,215.5 838.5,211.5 838.2,206.5 C838,201.5 840.8,197 845,195.1 C844.3,196.3 844.1,197.4 844.3,198.4 C845.2,198.3 846,197.9 846.5,197.3 C847.3,195.5 847.5,193 847.2,190.2 Z" stroke-width="1.3"/>
<rect x="837.6" y="239.9" width="22.3" height="21.7" rx="3.2" stroke-width="1.3"/><path d="M843.1,236.9 V241.5 M854.5,236.9 V241.5"/>
<circle cx="843.1" cy="245.3" r="1.45" stroke-width="1.1"/>
<circle cx="848.8" cy="245.3" r="1.45" stroke-width="1.1"/>
<circle cx="854.5" cy="245.3" r="1.45" stroke-width="1.1"/>
<circle cx="843.1" cy="250.9" r="1.45" stroke-width="1.1"/>
<circle cx="848.8" cy="250.9" r="1.45" stroke-width="1.1"/>
<circle cx="854.5" cy="250.9" r="1.45" stroke-width="1.1"/>
<circle cx="843.1" cy="256.6" r="1.45" stroke-width="1.1"/>
<circle cx="848.8" cy="256.6" r="1.45" stroke-width="1.1"/>
<path d="M845,302.5 C845,299.5 840.8,297.6 840.8,292.6 A8.7,8.7 0 0,1 858.2,292.6 C858.2,297.6 854,299.5 854,302.5 Z" stroke-width="1.3"/><path d="M845,305.5 H854 M846.5,308.3 H852.5 M846.7,293.2 H852.2 M849.5,293.2 V302"/>
<path d="M832.3,324.3 H865.5" stroke="#3a3e4a" stroke-width="1"/>
<path d="M850,341.8 H841 A3.2,3.2 0 0,0 837.8,345 V362.6 L842.3,358.9 H846" stroke-width="1.3"/><path d="M841.5,347 H852 M841.5,352 H849"/>
<path d="M871,352 H854.7 A15.5,15.5 0 0,0 854.7,383 H871 Z" fill="#333236" stroke="none"/>
<path d="M851.8,361.90000000000003 Q853.164,366.73600000000005 858.0,368.1 Q853.164,369.464 851.8,374.3 Q850.4359999999999,369.464 845.5999999999999,368.1 Q850.4359999999999,366.73600000000005 851.8,361.90000000000003 Z M861.5,358.6 Q862.204,361.096 864.7,361.8 Q862.204,362.504 861.5,365.0 Q860.796,362.504 858.3,361.8 Q860.796,361.096 861.5,358.6 Z M861.5,372.0 Q862.204,374.496 864.7,375.2 Q862.204,375.904 861.5,378.4 Q860.796,375.904 858.3,375.2 Q860.796,374.496 861.5,372.0 Z" fill="#a877f3" stroke="none"/>
<circle cx="857" cy="341.8" r="8.6" fill="#131722" stroke="none"/><circle cx="857" cy="341.8" r="7.2" fill="#f23c50" stroke="none"/>
<path d="M846.6,405.5 C846.6,403 843.1,401 843.1,396 A6.9,6.9 0 0,1 856.9,396 C856.9,401 853.4,403 853.4,405.5 Z" stroke-width="1.3"/><path d="M846.6,408.5 H853.4 M847.8,411.2 H852.2 M847.6,396.6 H852.4 M850,396.6 V405"/>
<path d="M841.2,390 A10.4,10.4 0 0,0 841.2,402.6 M858.8,390 A10.4,10.4 0 0,1 858.8,402.6 M838.3,387.5 A14,14 0 0,0 838.3,405 M861.7,387.5 A14,14 0 0,1 861.7,405"/>
<path d="M846,438.9 V446.7 L853.6,442.8 Z"/><path d="M843.3,435.6 A9.6,9.6 0 0,0 843.3,450 M855.7,435.6 A9.6,9.6 0 0,1 855.7,450 M839.5,431.8 A15,15 0 0,0 839.5,453.8 M859.5,431.8 A15,15 0 0,1 859.5,453.8"/>
<circle cx="859.8" cy="432.4" r="7" fill="#f4506a" stroke="none"/>
<path d="M839.3,496.1 H859.8 M842,496.1 V487 A7.5,7.5 0 0,1 857,487 V496.1 M848,479.8 A1.6,1.6 0 0,1 851,479.8 M847.3,497.2 A2.3,2.3 0 0,0 851.7,497.2" stroke-width="1.3"/>
<path d="M332,453 V473" stroke="#3a3e4a" stroke-width="1"/>
<path transform="translate(0.8,-0.7)" d="M346.8,464 V458.5 A2,2 0 0,1 348.8,456.5 H361.8 A2,2 0 0,1 363.8,458.5 V468.5 A2,2 0 0,1 361.8,470.5 H355.5 M351.3,454.3 V458.5 M359.3,454.3 V458.5 M346.8,460.8 H363.8 M345.5,467.4 H352.5 M350.3,465 L352.7,467.4 L350.3,469.8"/>
<path d="M177.8,503 L181,506.1 L184.2,503" stroke-width="1.2" stroke="#b4b7c0"/>
<path d="M759.5,507.5 L767.7,500.3 L775.9,507.5" stroke-width="1.4"/>
<path d="M794.8,501.2 V499 A2.3,2.3 0 0,1 797.1,496.7 H808.3 A2.3,2.3 0 0,1 810.6,499 V501.2 M794.8,508 V510.3 A2.3,2.3 0 0,0 797.1,512.6 H808.3 A2.3,2.3 0 0,0 810.6,510.3 V508" stroke-width="1.4"/>
<path d="M194.7,8 V30" stroke="#3a3e4a" stroke-width="1"/>
<path d="M433.5,8 V30" stroke="#3a3e4a" stroke-width="1"/>
<path d="M480.4,8 V30" stroke="#3a3e4a" stroke-width="1"/>
<path d="M585.5,8 V30" stroke="#3a3e4a" stroke-width="1"/>
<path d="M670.3,8 V30" stroke="#3a3e4a" stroke-width="1"/>
<path d="M0,513 Q1,522 8,525 L0,525 Z" fill="#133a6b" stroke="none"/><path d="M0,517 Q1,523 5,525 L0,525 Z" fill="#2d7fd0" stroke="none"/>
<path d="M871,517 Q870,523 864,525 L871,525 Z" fill="#133a6b" stroke="none"/><path d="M871,520 Q870,524 867,525 L871,525 Z" fill="#2d7fd0" stroke="none"/>
</svg>
<div class="t" style="left:82.5px;top:13.0px;font-size:13.4px;color:#e4e6eb;font-weight:bold;transform:scaleX(0.9013);transform-origin:0 0;">EURUSD</div>
<div class="t" style="left:207.3px;top:12.3px;font-size:13.4px;color:#d1d4dc;-webkit-text-stroke:0.3px #d1d4dc;transform:scaleX(0.9778);transform-origin:0 0;">5m</div>
<div class="t" style="left:239.0px;top:12.3px;font-size:13.4px;color:#d1d4dc;-webkit-text-stroke:0.3px #d1d4dc;transform:scaleX(0.9591);transform-origin:0 0;">15m</div>
<div class="t" style="left:277.0px;top:12.3px;font-size:13.4px;color:#d1d4dc;-webkit-text-stroke:0.3px #d1d4dc;transform:scaleX(0.9591);transform-origin:0 0;">30m</div>
<div class="t" style="left:314.5px;top:12.3px;font-size:13.4px;color:#d1d4dc;-webkit-text-stroke:0.3px #d1d4dc;transform:scaleX(0.9729);transform-origin:0 0;">1h</div>
<div class="t" style="left:341.5px;top:12.3px;font-size:13.4px;color:#d1d4dc;-webkit-text-stroke:0.3px #d1d4dc;transform:scaleX(0.9729);transform-origin:0 0;">4h</div>
<div class="t" style="left:368.0px;top:12.3px;font-size:13.4px;color:#3d6bf5;-webkit-text-stroke:0.3px #3d6bf5;transform:scaleX(0.7750);transform-origin:0 0;">D</div>
<div class="t" style="left:389.0px;top:12.3px;font-size:13.4px;color:#d1d4dc;-webkit-text-stroke:0.3px #d1d4dc;transform:scaleX(0.9883);transform-origin:0 0;">W</div>
<div class="t" style="left:794.6px;top:7.6px;font-size:13.2px;color:#d9dbe1;font-weight:bold;transform:scaleX(0.9739);transform-origin:0 0;">Wealthy Edu</div>
<div class="t" style="left:834.0px;top:21.8px;font-size:9.8px;color:#2f6df0;transform:scaleX(0.8954);transform-origin:0 0;">Save</div>
<div class="t" style="left:36.2px;top:5.5px;font-size:8.8px;color:#ffffff;font-weight:bold;letter-spacing:0.30px;">11</div>
<div class="t" style="left:854.6px;top:336.5px;font-size:11px;color:#ffffff;font-weight:bold;transform:scaleX(0.7193);transform-origin:0 0;">1</div>
<!--LEFTICONS-->
<!--RIGHTICONS-->
<!--RANGEICONS-->
<div class="t" style="left:71.3px;top:457.0px;font-size:13.4px;color:#dddfe6;-webkit-text-stroke:0.3px #dddfe6;transform:scaleX(0.8874);transform-origin:0 0;">1D</div>
<div class="t" style="left:99.0px;top:457.0px;font-size:13.4px;color:#dddfe6;-webkit-text-stroke:0.3px #dddfe6;transform:scaleX(0.8582);transform-origin:0 0;">5D</div>
<div class="t" style="left:127.0px;top:457.0px;font-size:13.4px;color:#dddfe6;-webkit-text-stroke:0.3px #dddfe6;transform:scaleX(0.8865);transform-origin:0 0;">1M</div>
<div class="t" style="left:155.7px;top:457.0px;font-size:13.4px;color:#dddfe6;-webkit-text-stroke:0.3px #dddfe6;transform:scaleX(0.8918);transform-origin:0 0;">3M</div>
<div class="t" style="left:184.4px;top:457.0px;font-size:13.4px;color:#dddfe6;-webkit-text-stroke:0.3px #dddfe6;transform:scaleX(0.9241);transform-origin:0 0;">6M</div>
<div class="t" style="left:214.2px;top:457.0px;font-size:13.4px;color:#dddfe6;-webkit-text-stroke:0.3px #dddfe6;transform:scaleX(0.8881);transform-origin:0 0;">YTD</div>
<div class="t" style="left:251.0px;top:457.0px;font-size:13.4px;color:#dddfe6;-webkit-text-stroke:0.3px #dddfe6;transform:scaleX(0.8542);transform-origin:0 0;">1Y</div>
<div class="t" style="left:278.0px;top:457.0px;font-size:13.4px;color:#dddfe6;-webkit-text-stroke:0.3px #dddfe6;transform:scaleX(0.8847);transform-origin:0 0;">5Y</div>
<div class="t" style="left:305.0px;top:457.0px;font-size:13.4px;color:#dddfe6;-webkit-text-stroke:0.3px #dddfe6;letter-spacing:0.70px;">All</div>
<div class="t" style="left:722.7px;top:456.8px;font-size:13.4px;color:#dddfe6;-webkit-text-stroke:0.3px #dddfe6;letter-spacing:0.06px;">15:15:58 (UTC)</div>
<div class="t" style="left:71.8px;top:498.3px;font-size:13.4px;color:#dddfe6;-webkit-text-stroke:0.3px #dddfe6;letter-spacing:0.06px;">Stock Screener</div>
<div class="t" style="left:210.7px;top:498.3px;font-size:13.4px;color:#dddfe6;-webkit-text-stroke:0.3px #dddfe6;letter-spacing:0.22px;">Pine Editor</div>
<div class="t" style="left:310.7px;top:498.3px;font-size:13.4px;color:#dddfe6;-webkit-text-stroke:0.3px #dddfe6;letter-spacing:0.29px;">Strategy Tester</div>
<div class="t" style="left:437.6px;top:498.3px;font-size:13.4px;color:#dddfe6;-webkit-text-stroke:0.3px #dddfe6;letter-spacing:0.04px;">Trading Panel</div>
</body></html>
